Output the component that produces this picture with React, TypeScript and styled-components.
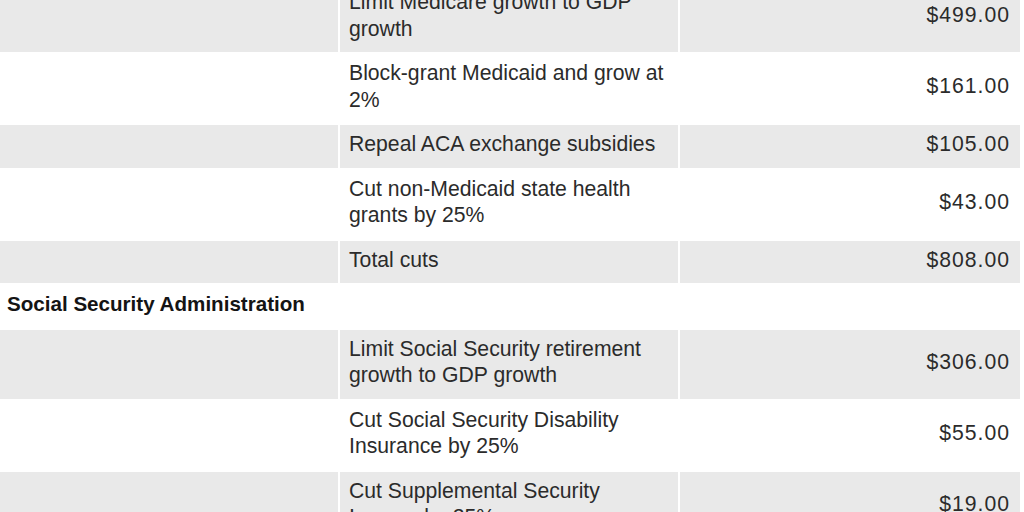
import React from "react";
import styled, { createGlobalStyle } from "styled-components";

const Global = createGlobalStyle`
  html, body { margin: 0; padding: 0; background: #ffffff; }
  body { font-family: "Liberation Sans", Arial, sans-serif; color: #2b2b2b; }
`;

const Viewport = styled.div`
  width: 1024px;
  height: 512px;
  overflow: hidden;
  background: #ffffff;
`;

const Table = styled.table`
  border-collapse: separate;
  border-spacing: 2px;
  width: 1024px;
  margin: -19px 0 0 -2px;
  table-layout: fixed;
  font-size: 21.2px;
  line-height: 26.5px;
`;

const Row = styled.tr<{ $shaded?: boolean }>`
  background: ${(p) => (p.$shaded ? "#e9e9e9" : "#ffffff")};
`;

const Blank = styled.td`
  padding: 0;
`;

const Desc = styled.td`
  padding: 6px 9px 10px 9px;
  vertical-align: middle;
  text-align: left;
  color: #2b2b2b;
`;

const Value = styled.td`
  padding: 6px 10px 10px 10px;
  vertical-align: middle;
  text-align: right;
  letter-spacing: 1px;
  color: #2b2b2b;
`;

const Section = styled.td`
  padding: 6px 7px 10px 7px;
  font-weight: 700;
  font-size: 20.6px;
  color: #141414;
  text-align: left;
`;

type Item = { label: string; value: string };

const health: Item[] = [
  { label: "Limit Medicare growth to GDP growth", value: "$499.00" },
  { label: "Block-grant Medicaid and grow at 2%", value: "$161.00" },
  { label: "Repeal ACA exchange subsidies", value: "$105.00" },
  { label: "Cut non-Medicaid state health grants by 25%", value: "$43.00" },
  { label: "Total cuts", value: "$808.00" },
];

const ssa: Item[] = [
  { label: "Limit Social Security retirement growth to GDP growth", value: "$306.00" },
  { label: "Cut Social Security Disability Insurance by 25%", value: "$55.00" },
  { label: "Cut Supplemental Security Income by 25%", value: "$19.00" },
];

const ItemRow = ({ item, shaded }: { item: Item; shaded: boolean }) => (
  <Row $shaded={shaded}>
    <Blank />
    <Desc>{item.label}</Desc>
    <Value>{item.value}</Value>
  </Row>
);

export default function App() {
  return (
    <>
      <Global />
      <Viewport>
        <Table>
          <colgroup>
            <col style={{ width: 338 }} />
            <col style={{ width: 338 }} />
            <col style={{ width: 340 }} />
          </colgroup>
          <tbody>
            {health.map((it, i) => (
              <ItemRow key={it.label} item={it} shaded={i % 2 === 0} />
            ))}
            <Row>
              <Section colSpan={3}>Social Security Administration</Section>
            </Row>
            {ssa.map((it, i) => (
              <ItemRow key={it.label} item={it} shaded={i % 2 === 0} />
            ))}
          </tbody>
        </Table>
      </Viewport>
    </>
  );
}
